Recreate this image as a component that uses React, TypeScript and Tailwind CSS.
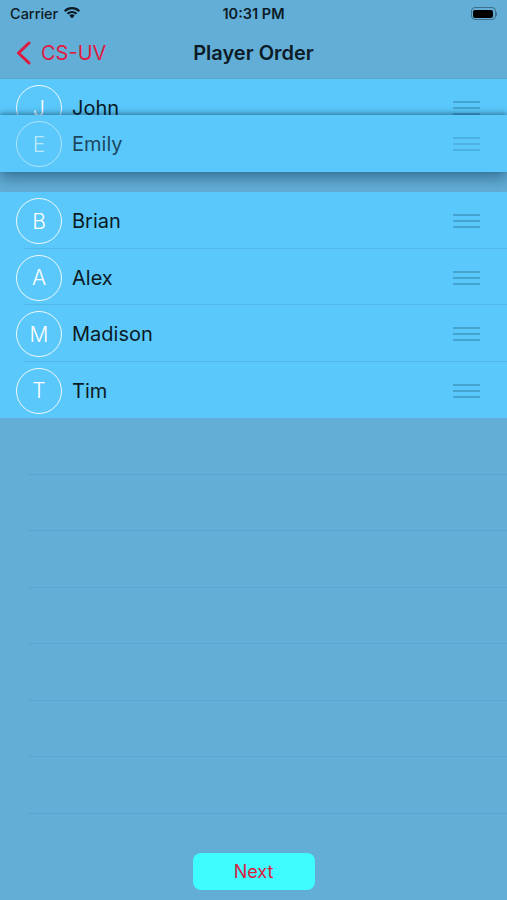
const players = ['Brian', 'Alex', 'Madison', 'Tim'];

function Avatar({ letter, faded }: { letter: string; faded?: boolean }) {
  return (
    <div
      className={`w-[46px] h-[46px] shrink-0 rounded-full border-[1.5px] flex items-center justify-center text-[21px] font-light ${
        faded ? 'border-white/50 text-white/60' : 'border-white/90 text-white'
      }`}
    >
      {letter}
    </div>
  );
}

function Handle({ faded }: { faded?: boolean }) {
  return (
    <div className={`w-[27px] flex flex-col gap-[4px] ${faded ? 'opacity-60' : ''}`}>
      <div className="h-[2px] bg-[#45a4cf]" />
      <div className="h-[2px] bg-[#45a4cf]" />
      <div className="h-[2px] bg-[#45a4cf]" />
    </div>
  );
}

function Row({ name, last, faded }: { name: string; last?: boolean; faded?: boolean }) {
  return (
    <div className="h-[56.5px] bg-[#5ac8fa] flex items-center pl-4 pr-[27px] pt-[2px] relative">
      <Avatar letter={name[0]} faded={faded} />
      <span className={`ml-[10px] text-[20px] flex-1 ${faded ? 'text-[#0b2233]/80' : 'text-[#0b1a24]'}`}>{name}</span>
      <Handle faded={faded} />
      {!last && <div className="absolute left-6 right-0 bottom-0 h-px bg-[#52b6e6]" />}
    </div>
  );
}

export default function App() {
  return (
    <div className="w-[507px] h-[900px] bg-[#62aed7] flex flex-col overflow-hidden" style={{ fontFamily: 'Inter, "Liberation Sans", sans-serif' }}>
      {/* Status Bar */}
      <div className="h-[27px] flex items-center px-[10px] text-[14.5px] text-[#0d1b26] relative">
        <span className="font-medium">Carrier</span>
        <svg className="ml-[5px] mb-[2px]" width="18" height="13" viewBox="0 0 18 13">
          <path d="M9 12.5 L6.3 9.6 A4 4 0 0 1 11.7 9.6 Z" fill="#0d1b26" />
          <path d="M3.7 7.1 A7.6 7.6 0 0 1 14.3 7.1 L12.9 8.6 A5.6 5.6 0 0 0 5.1 8.6 Z" fill="#0d1b26" />
          <path d="M1 4.4 A11.4 11.4 0 0 1 17 4.4 L15.6 5.9 A9.4 9.4 0 0 0 2.4 5.9 Z" fill="#0d1b26" />
        </svg>
        <span className="absolute left-0 right-0 text-center font-semibold">10:31 PM</span>
        <div className="ml-auto flex items-center">
          <div className="w-[25px] h-[13px] rounded-[4px] border border-[#3d6f8c] p-[1.5px]">
            <div className="w-full h-full rounded-[2px] bg-black" />
          </div>
          <div className="w-[1.5px] h-[4px] bg-[#3d6f8c] rounded-r" />
        </div>
      </div>

      {/* Nav Bar */}
      <div className="h-[52px] flex items-center relative border-b border-[#5ba4cc]">
        <div className="flex items-center pl-[15px] text-[#e0193f]">
          <svg width="17" height="24" viewBox="0 0 17 24" fill="none">
            <path d="M14 2 L3.5 12 L14 22" stroke="#e0193f" strokeWidth="3" strokeLinecap="round" strokeLinejoin="round" />
          </svg>
          <span className="text-[20px] ml-[9px]">CS-UV</span>
        </div>
        <span className="absolute left-0 right-0 text-center text-[20px] font-semibold text-[#0d1b26] pointer-events-none">
          Player Order
        </span>
      </div>

      {/* List */}
      <div className="relative">
        <Row name="John" last />
        <div className="h-[56.5px]" />
        {/* Dragged row */}
        <div className="absolute left-0 right-0 top-[36px] shadow-[0_-2px_4px_rgba(0,40,70,0.35),0_6px_14px_rgba(0,40,70,0.45)]">
          <Row name="Emily" last faded />
        </div>
        {players.map((p, i) => (
          <Row key={p} name={p} last={i === players.length - 1} />
        ))}
      </div>

      {/* Empty separators */}
      <div className="flex flex-col">
        {Array.from({ length: 7 }).map((_, i) => (
          <div key={i} className="h-[56.5px] flex items-end pl-[28px]">
            <div className="h-px w-full bg-[#5aa5cf]" />
          </div>
        ))}
      </div>

      {/* Footer */}
      <div className="flex-1 flex items-end justify-center pb-[10px]">
        <button className="w-[122px] h-[37px] rounded-[8px] bg-[#3ffcff] text-[#d8203f] text-[18px]">Next</button>
      </div>
    </div>
  );
}
